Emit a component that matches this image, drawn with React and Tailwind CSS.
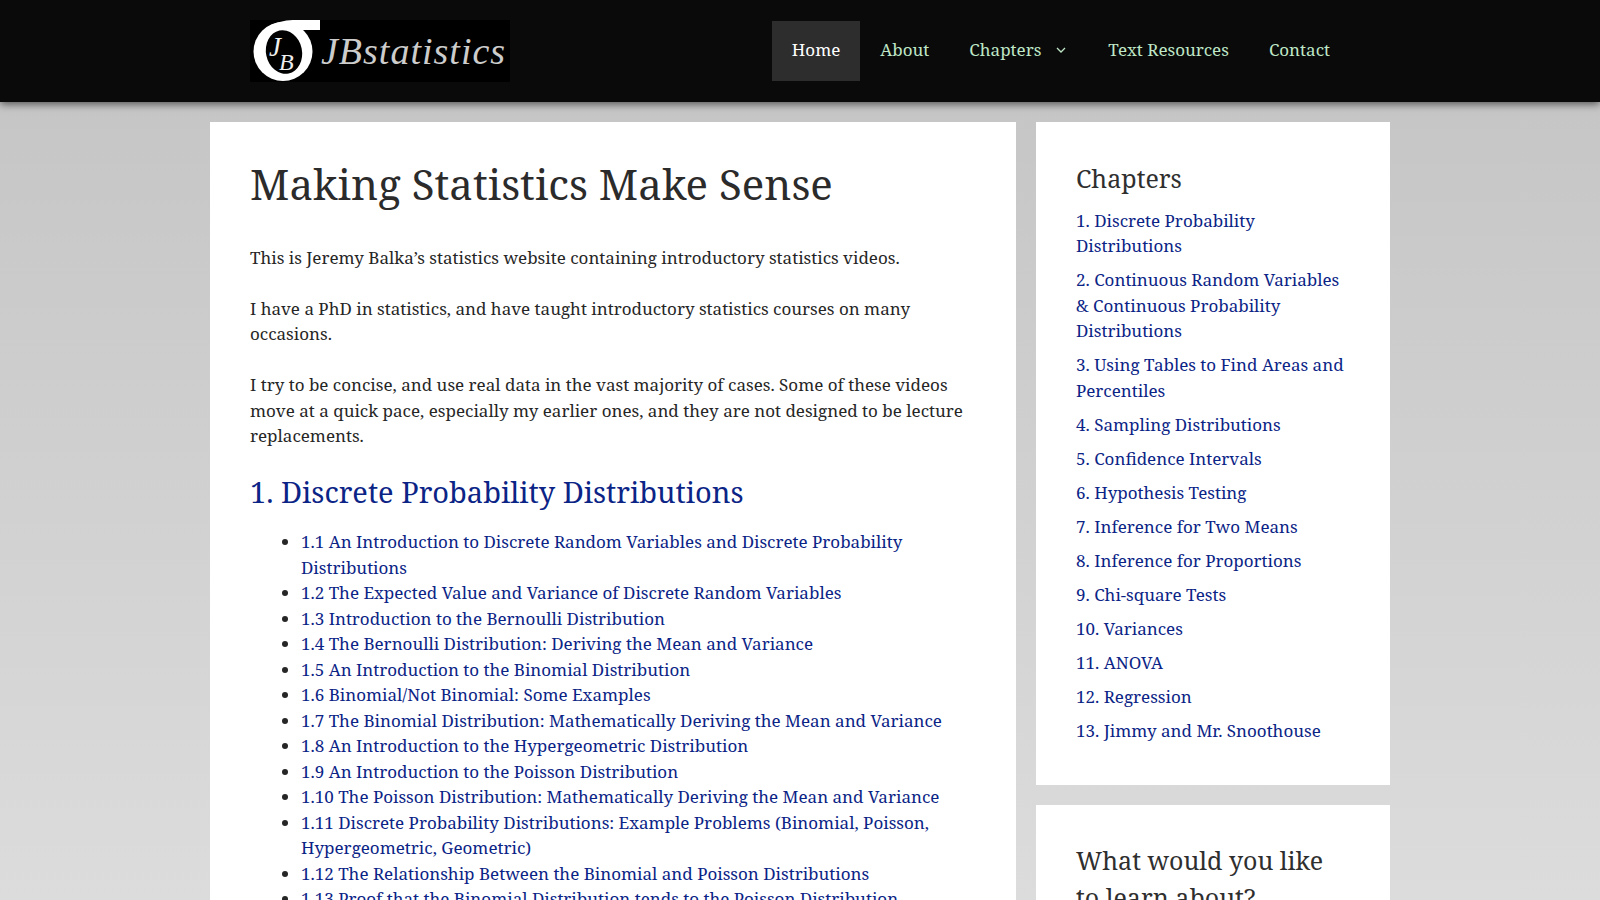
import React from "react";

const nav = ["About"];
const side = [
  "1. Discrete Probability Distributions",
  "2. Continuous Random Variables & Continuous Probability Distributions",
  "3. Using Tables to Find Areas and Percentiles",
  "4. Sampling Distributions",
  "5. Confidence Intervals",
  "6. Hypothesis Testing",
  "7. Inference for Two Means",
  "8. Inference for Proportions",
  "9. Chi-square Tests",
  "10. Variances",
  "11. ANOVA",
  "12. Regression",
  "13. Jimmy and Mr. Snoothouse",
];
const list = [
  "1.1 An Introduction to Discrete Random Variables and Discrete Probability Distributions",
  "1.2 The Expected Value and Variance of Discrete Random Variables",
  "1.3 Introduction to the Bernoulli Distribution",
  "1.4 The Bernoulli Distribution: Deriving the Mean and Variance",
  "1.5 An Introduction to the Binomial Distribution",
  "1.6 Binomial/Not Binomial: Some Examples",
  "1.7 The Binomial Distribution: Mathematically Deriving the Mean and Variance",
  "1.8 An Introduction to the Hypergeometric Distribution",
  "1.9 An Introduction to the Poisson Distribution",
  "1.10 The Poisson Distribution: Mathematically Deriving the Mean and Variance",
  "1.11 Discrete Probability Distributions: Example Problems (Binomial, Poisson, Hypergeometric, Geometric)",
  "1.12 The Relationship Between the Binomial and Poisson Distributions",
  "1.13 Proof that the Binomial Distribution tends to the Poisson Distribution",
];

function Logo() {
  return (
    <div className="relative w-[260px] h-[62px] bg-black overflow-hidden">
      <svg width="72" height="62" viewBox="0 0 72 62" className="absolute left-0 top-0">
        <ellipse cx="33" cy="31.5" rx="29.5" ry="29.5" fill="#fff" />
        <path d="M20 6 C28 1 38 0 46 0 L70 0 L70 10 L50 10 Z" fill="#fff" />
        <ellipse cx="34" cy="32" rx="18" ry="22" fill="#000" transform="rotate(-12 34 32)" />
        <text x="19" y="36" fontFamily="Liberation Serif" fontStyle="italic" fontSize="27" fill="#eeeeee">J</text>
        <text x="29" y="50" fontFamily="Liberation Serif" fontStyle="italic" fontSize="24" fill="#eeeeee">B</text>
      </svg>
      <span className="absolute left-[71px] top-[6px] font-['Liberation_Serif',serif] italic text-[38px] leading-[50px] text-[#cccccc] tracking-[1px] whitespace-nowrap">
        JBstatistics
      </span>
    </div>
  );
}

export default function App() {
  return (
    <div className="h-[900px] overflow-hidden bg-gradient-to-b from-[#c3c3c3] to-[#dcdcdc] font-['Noto_Serif','DejaVu_Serif',serif] text-[17px] leading-[25.5px] text-[#262626]">
      <header className="h-[102px] bg-[#0a0a0a] shadow-[0_2px_8px_rgba(0,0,0,0.6)] relative">
        <div className="w-[1180px] mx-auto h-full flex items-center justify-between pl-10 pr-10">
          <Logo />
          <nav className="flex h-[60px] items-center text-[#bfe6c6]">
            <a className="px-5 pb-[3px] h-full flex items-center bg-[#2d2d2d] text-white">Home</a>
            {nav.map((n) => (
              <a key={n} className="px-5 pb-[3px] h-full flex items-center">{n}</a>
            ))}
            <a className="pl-5 pr-[21px] pb-[3px] h-full flex items-center">
              Chapters
              <svg width="12" height="12" viewBox="0 0 12 12" className="ml-[14px]" fill="none" stroke="currentColor" strokeWidth="1.3">
                <path d="M2 4 L6 8 L10 4" />
              </svg>
            </a>
            <a className="px-5 pb-[3px] h-full flex items-center">Text Resources</a>
            <a className="px-5 pb-[3px] h-full flex items-center">Contact</a>
          </nav>
        </div>
      </header>
      <main className="w-[1180px] mx-auto mt-5 flex gap-5 items-start">
        <article className="w-[806px] bg-white px-10 pt-[37px] pb-10">
          <h1 className="text-[42px] leading-[50px] mb-[36px] text-[#2b2b2b]">Making Statistics Make Sense</h1>
          <p className="mb-[25px]">This is Jeremy Balka’s statistics website containing introductory statistics videos.</p>
          <p className="mb-[25.5px]">I have a PhD in statistics, and have taught introductory statistics courses on many occasions.</p>
          <p className="mb-[25px]">I try to be concise, and use real data in the vast majority of cases. Some of these videos move at a quick pace, especially my earlier ones, and they are not designed to be lecture replacements.</p>
          <h2 className="text-[29px] leading-[36px] text-[#0b2486] mb-[19.5px]">1. Discrete Probability Distributions</h2>
          <ul className="list-disc pl-[51px] text-[#0b2486] marker:text-[#262626]">
            {list.map((t) => <li key={t}>{t}</li>)}
          </ul>
        </article>
        <aside className="w-[354px] flex flex-col gap-5">
          <section className="bg-white px-10 pt-[41px] pb-[33.5px]">
            <h3 className="text-[25px] leading-[30px] mb-[14.5px] text-[#2f2f2f]">Chapters</h3>
            <ul className="text-[#0b2486]">
              {side.map((t) => <li key={t} className="pb-[8.5px]">{t}</li>)}
            </ul>
          </section>
          <section className="bg-white px-10 pt-[37px]">
            <h3 className="text-[25px] leading-[37px] text-[#2f2f2f]">What would you like to learn about?</h3>
          </section>
        </aside>
      </main>
    </div>
  );
}
